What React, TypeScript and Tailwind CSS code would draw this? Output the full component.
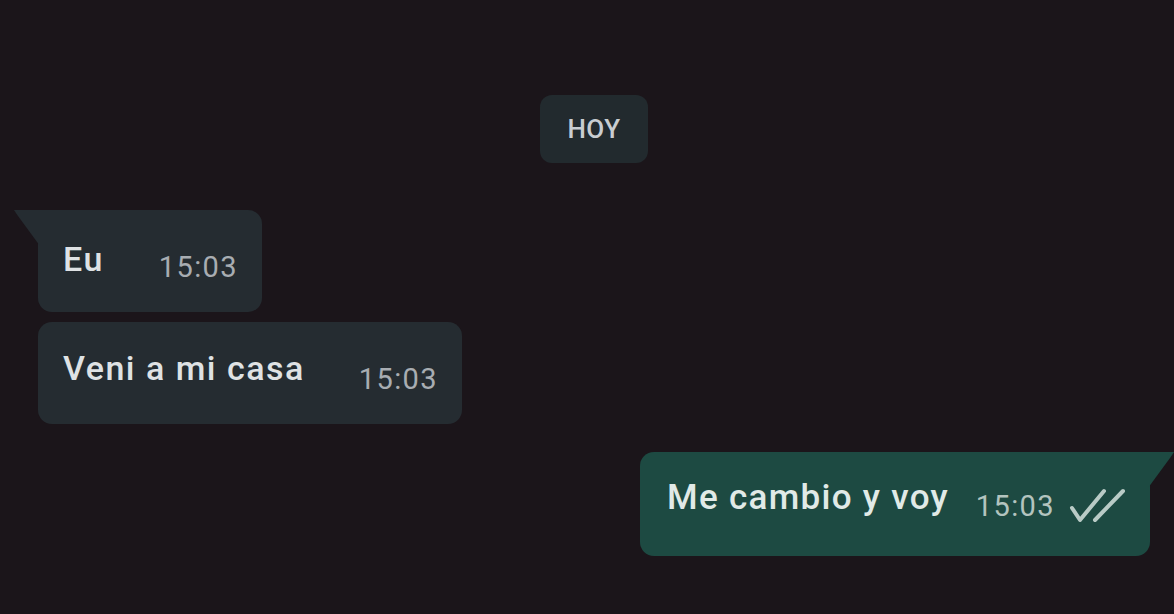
import React from "react";

const font = { fontFamily: "Roboto, 'Noto Sans', sans-serif" };

function InBubble({
  text,
  time,
  tail,
  width,
  textShift,
}: {
  text: string;
  time: string;
  tail?: boolean;
  width: string;
  textShift: string;
}) {
  return (
    <div
      className={`relative ml-[38px] ${width} h-[102px] bg-[#252c31] rounded-[14px] ${
        tail ? "rounded-tl-none" : ""
      } flex items-center pl-[25px] pr-[24px]`}
    >
      {tail && (
        <svg className="absolute left-[-24px] top-0" width="26" height="36" viewBox="0 0 26 36">
          <path d="M0 0 H26 V36 L4 6 Q0 0 0 0 Z" fill="#252c31" />
        </svg>
      )}
      <span className={`text-[#dfe2e4] text-[34px] font-medium tracking-[1.5px] ${textShift}`}>{text}</span>
      <span className="ml-auto text-[#a8adb2] text-[29px] tracking-[1.4px] mt-[14px]">{time}</span>
    </div>
  );
}

export default function App() {
  return (
    <div style={font} className="w-[1174px] h-[614px] bg-[#1b151a] overflow-hidden flex flex-col pt-[95px]">
      <div className="self-center w-[108px] h-[68px] bg-[#222a2e] rounded-[12px] flex items-center justify-center text-[#c9cdd1] text-[26px] font-medium tracking-[0.5px] ml-[14px]">
        HOY
      </div>
      <div className="mt-[47px]">
        <InBubble text="Eu" time="15:03" tail width="w-[224px]" textShift="-mt-[4px]" />
      </div>
      <div className="mt-[10px]">
        <InBubble text="Veni a mi casa" time="15:03" width="w-[424px]" textShift="-mt-[10px]" />
      </div>
      <div className="mt-[28px] self-end mr-[24px] relative w-[510px] h-[104px] bg-[#1d4a42] rounded-[14px] rounded-tr-none flex items-center pl-[27px] pr-[22px]">
        <svg className="absolute right-[-24px] top-0" width="26" height="36" viewBox="0 0 26 36">
          <path d="M26 0 H0 V36 L22 6 Q26 0 26 0 Z" fill="#1d4a42" />
        </svg>
        <span className="text-[#e1eae7] text-[35px] font-medium tracking-[1.3px] -mt-[12px]">Me cambio y voy</span>
        <span className="ml-auto text-[#b3c4bf] text-[29px] tracking-[1.4px] mt-[6px]">15:03</span>
        <svg
          className="ml-[13px] mt-[4px]"
          width="60"
          height="40"
          viewBox="0 0 60 40"
          fill="none"
          stroke="#b9cbc6"
          strokeWidth="4"
          strokeLinecap="round"
          strokeLinejoin="round"
        >
          <path d="M4 22 L12 34 L36 5" />
          <path d="M27 34 L55 5" />
        </svg>
      </div>
    </div>
  );
}
